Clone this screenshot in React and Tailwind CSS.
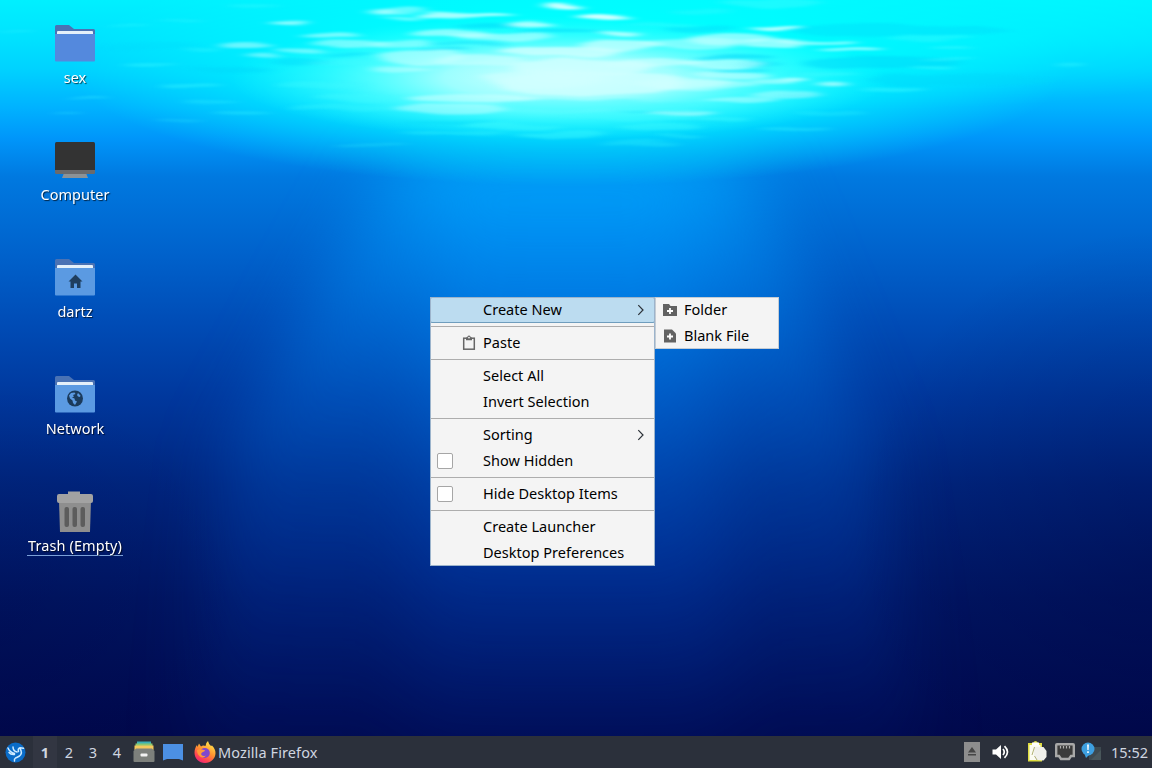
import { clsx } from 'clsx';

// bright streaks on the water surface: [cx, cy, rx, ry, opacity]
const STREAKS = [
  [13, 33, 20, 1.2, 0.25], [255, 4, 24, 2, 0.3], [180, 20, 22, 1.5, 0.3], [128, 24, 20, 1.5, 0.25],
  [288, 22, 16, 1.8, 0.7], [380, 10, 12, 3, 0.6], [245, 44, 26, 3, 0.5], [200, 49, 18, 2, 0.3],
  [262, 55, 16, 2.5, 0.45], [330, 34, 28, 3, 0.55], [350, 42, 36, 3, 0.5], [300, 49, 26, 2.5, 0.45],
  [150, 63, 26, 2, 0.35], [190, 84, 30, 2, 0.35], [86, 98, 18, 1.2, 0.35], [66, 112, 14, 1, 0.25],
  [210, 101, 26, 1.5, 0.25], [240, 112, 28, 1.5, 0.3], [180, 120, 24, 1.5, 0.2], [340, 62, 34, 4, 0.4],
  [320, 84, 44, 4, 0.35], [360, 97, 44, 4, 0.4], [370, 144, 36, 1.5, 0.2], [340, 108, 50, 3, 0.3],
  [400, 10, 24, 3, 0.45], [465, 14, 48, 2.5, 0.8], [400, 16, 22, 1.5, 0.5], [562, 5, 17, 2.4, 1],
  [602, 15.5, 26, 2.6, 1], [530, 24, 24, 2.4, 0.8], [617, 32, 20, 2, 0.8], [450, 33, 40, 5, 0.6],
  [500, 36, 50, 4, 0.55], [400, 42, 30, 3.5, 0.45], [560, 50, 60, 5, 0.8], [620, 44, 40, 6, 0.7],
  [420, 56, 44, 7, 0.55], [480, 60, 44, 6, 0.55], [400, 68, 30, 3, 0.45], [580, 66, 70, 9, 0.8],
  [650, 62, 50, 4, 0.6], [590, 82, 90, 12, 0.75], [540, 78, 60, 9, 0.6], [680, 82, 50, 5, 0.55],
  [470, 97, 64, 5, 0.55], [450, 108, 56, 4.5, 0.45], [600, 104, 100, 5, 0.42], [510, 125, 50, 3.5, 0.42],
  [560, 134, 44, 3.5, 0.42], [450, 132, 54, 2, 0.3], [620, 116, 64, 4, 0.4], [680, 112, 34, 2.4, 0.5],
  [660, 126, 40, 4, 0.4], [710, 118, 38, 2, 0.4], [640, 142, 38, 2, 0.25], [676, 136, 26, 1.8, 0.3],
  [690, 42, 50, 5, 0.45], [730, 38, 42, 5, 0.6], [775, 27, 26, 2.2, 0.85], [772, 43, 30, 4.5, 0.65],
  [815, 41, 40, 2, 0.6], [850, 48, 30, 1.8, 0.65], [720, 64, 44, 4, 0.55], [730, 74, 40, 3.5, 0.55],
  [792, 77, 14, 2.6, 0.75], [770, 80, 24, 3, 0.5], [820, 72, 36, 2, 0.42], [831, 84, 14, 2.4, 0.65],
  [700, 84, 56, 5, 0.45], [785, 94, 36, 3.5, 0.45], [740, 99, 36, 3, 0.45], [893, 89, 32, 3, 0.42],
  [830, 112, 34, 3, 0.2], [795, 128, 34, 2, 0.3], [930, 38, 42, 3, 0.35], [950, 48, 20, 2, 0.42],
  [946, 58, 28, 1.2, 0.4], [932, 66, 22, 2, 0.42], [1070, 65, 14, 1.5, 0.35], [770, 2, 50, 5, 0.42],
  [700, 11, 28, 2, 0.3], [660, 24, 34, 2, 0.35],
];

// darker troughs between the waves
const TROUGHS = [
  [490, 26, 34, 2, 0.5], [560, 32, 42, 2, 0.5], [700, 29, 34, 3, 0.4], [470, 44, 40, 2, 0.35],
  [440, 50, 30, 1.5, 0.45], [735, 58, 40, 3, 0.5], [760, 65, 20, 3, 0.4],
  [740, 70, 30, 1.5, 0.4], [900, 31, 110, 6, 0.35], [450, 123, 46, 2, 0.35], [880, 62, 80, 6, 0.5],
  [700, 121, 30, 1.2, 0.35], [650, 112, 34, 1, 0.3], [800, 96, 20, 1.5, 0.3], [350, 54, 24, 2, 0.4],
  [300, 62, 30, 4, 0.4], [230, 70, 40, 3, 0.4], [150, 47, 50, 4, 0.2], [960, 80, 90, 6, 0.4],
];

const ICONS = [
  { label: 'sex', kind: 'folder' },
  { label: 'Computer', kind: 'computer' },
  { label: 'dartz', kind: 'home' },
  { label: 'Network', kind: 'network' },
  { label: 'Trash (Empty)', kind: 'trash' },
];

const MENU = [
  { label: 'Create New', arrow: true, active: true },
  null,
  { label: 'Paste', paste: true },
  null,
  { label: 'Select All' },
  { label: 'Invert Selection' },
  null,
  { label: 'Sorting', arrow: true },
  { label: 'Show Hidden', check: true },
  null,
  { label: 'Hide Desktop Items', check: true },
  null,
  { label: 'Create Launcher' },
  { label: 'Desktop Preferences' },
];

const Wallpaper = () => (
  <svg className="absolute inset-0" width="1152" height="768" viewBox="0 0 1152 768">
    <defs>
      <linearGradient id="sea" x1="0" y1="0" x2="0" y2="768" gradientUnits="userSpaceOnUse">
        <stop offset="0" stopColor="#00f0ff" />
        <stop offset="0.05" stopColor="#00e2ff" />
        <stop offset="0.09" stopColor="#00d2ff" />
        <stop offset="0.14" stopColor="#00b2ff" />
        <stop offset="0.18" stopColor="#0096fa" />
        <stop offset="0.23" stopColor="#0079e0" />
        <stop offset="0.33" stopColor="#0062cc" />
        <stop offset="0.42" stopColor="#004cb6" />
        <stop offset="0.52" stopColor="#00379c" />
        <stop offset="0.63" stopColor="#00257e" />
        <stop offset="0.78" stopColor="#001562" />
        <stop offset="0.96" stopColor="#00084c" />
      </linearGradient>
      <radialGradient id="shade" cx="0.5" cy="0.5" r="0.5">
        <stop offset="0" stopColor="#000038" stopOpacity="0.4" />
        <stop offset="1" stopColor="#000038" stopOpacity="0" />
      </radialGradient>
      <linearGradient id="ray" x1="0" y1="130" x2="0" y2="760" gradientUnits="userSpaceOnUse">
        <stop offset="0" stopColor="#00b4ff" stopOpacity="0.8" />
        <stop offset="0.15" stopColor="#00a0ff" stopOpacity="0.62" />
        <stop offset="0.4" stopColor="#0082f0" stopOpacity="0.42" />
        <stop offset="0.7" stopColor="#0050d0" stopOpacity="0.3" />
        <stop offset="1" stopColor="#0030a0" stopOpacity="0.08" />
      </linearGradient>
      <radialGradient id="glow" cx="0.5" cy="0.5" r="0.5">
        <stop offset="0" stopColor="#00ffff" />
        <stop offset="0.4" stopColor="#00ffff" stopOpacity="0.9" />
        <stop offset="0.7" stopColor="#00ffff" stopOpacity="0.42" />
        <stop offset="1" stopColor="#00ffff" stopOpacity="0" />
      </radialGradient>
      <radialGradient id="sun" cx="0.5" cy="0.5" r="0.5">
        <stop offset="0" stopColor="#d6ffff" />
        <stop offset="0.35" stopColor="#b8ffff" stopOpacity="0.85" />
        <stop offset="0.7" stopColor="#70ffff" stopOpacity="0.4" />
        <stop offset="1" stopColor="#40ffff" stopOpacity="0" />
      </radialGradient>
      <filter id="soft" x="-40%" y="-40%" width="180%" height="180%" colorInterpolationFilters="sRGB">
        <feGaussianBlur stdDeviation="34 26" />
      </filter>
      <filter id="wave" x="0" y="-20" width="1152" height="220" filterUnits="userSpaceOnUse" colorInterpolationFilters="sRGB">
        <feTurbulence type="fractalNoise" baseFrequency="0.014 0.07" numOctaves="2" seed="4" />
        <feDisplacementMap in="SourceGraphic" scale="9" xChannelSelector="R" yChannelSelector="G" />
        <feGaussianBlur stdDeviation="7 1.1" />
      </filter>
    </defs>
    <rect width="1152" height="768" fill="url(#sea)" />
    <g filter="url(#soft)">
      <polygon points="400,150 740,150 870,440 930,800 180,800 230,440" fill="url(#ray)" opacity="0.8" />
      <polygon points="440,150 690,150 740,800 400,800" fill="url(#ray)" opacity="0.7" />
    </g>
    <ellipse cx="1152" cy="560" rx="300" ry="330" fill="url(#shade)" opacity="0.7" />
    <ellipse cx="0" cy="640" rx="260" ry="260" fill="url(#shade)" opacity="0.4" />
    <ellipse cx="570" cy="66" rx="500" ry="120" fill="url(#glow)" />
    <ellipse cx="850" cy="20" rx="500" ry="90" fill="url(#glow)" opacity="0.5" />
    <ellipse cx="560" cy="78" rx="330" ry="62" fill="url(#sun)" />
    <g filter="url(#wave)">
      {TROUGHS.map(([cx, cy, rx, ry, o], i) => (
        <ellipse key={i} cx={cx} cy={cy} rx={rx} ry={ry} fill="#00d8fa" opacity={o} />
      ))}
      {STREAKS.map(([cx, cy, rx, ry, o], i) => (
        <ellipse key={i} cx={cx + 1} cy={cy + 1} rx={rx} ry={ry} fill={o > 0.42 ? '#d0ffff' : '#40faff'} opacity={o} />
      ))}
    </g>
  </svg>
);

const Folder = ({ color, children }) => (
  <svg width="40" height="38" viewBox="0 0 40 38">
    <path d="M0 1.5Q0 0 1.5 0H14L19 4H38.5Q40 4 40 5.5V30H0Z" fill="#4a72b4" />
    <rect x="2" y="6" width="36" height="6" rx="1" fill="#e4f0fa" />
    <path d="M0 9H40V35.5Q40 36.5 39 36.5H1Q0 36.5 0 35.5Z" fill={color} />
    {children}
  </svg>
);

const DesktopIcon = ({ kind }) => {
  if (kind === 'computer') {
    return (
      <svg width="40" height="38" viewBox="0 0 40 38">
        <path d="M9 31H31L33 36H7Z" fill="#8c9296" />
        <path d="M0 27H40V30.5Q40 32 38.5 32H1.5Q0 32 0 30.5Z" fill="#6a6a6c" />
        <path d="M0 1.5Q0 0 1.5 0H38.5Q40 0 40 1.5V28H0Z" fill="#333333" />
      </svg>
    );
  }
  if (kind === 'trash') {
    return (
      <svg width="40" height="42" viewBox="0 0 40 42" className="-mt-0.5">
        <path d="M4 10H36L35 41H5Z" fill="#8e8e8e" />
        <path d="M13 0.5H25V3H36Q38 3 38 5V10Q38 12 36 12H4Q2 12 2 10V5Q2 3 4 3H13Z" fill="#a2a2a2" />
        <g fill="#5c5c5c">
          <rect x="9.5" y="16" width="4.5" height="20" rx="2" />
          <rect x="17.5" y="16" width="4.5" height="20" rx="2" />
          <rect x="25.5" y="16" width="4.5" height="20" rx="2" />
        </g>
      </svg>
    );
  }
  return (
    <Folder color={kind === 'folder' ? '#5489dd' : '#5b9ae2'}>
      {kind === 'home' && (
        <path d="M20.5 15.5L27.5 22.5H25.5V29H22V24.5H19V29H15.5V22.5H13.5Z" fill="#1f3e5e" />
      )}
      {kind === 'network' && (
        <>
          <circle cx="20" cy="22.5" r="8" fill="#1b3b5c" />
          <path d="M14 19.5L16 17L19.5 16.5L20.5 18L18 19L19 20.5L17 21.5L19.5 22.5L20 24.5L22 25.5L20 29L18 27L17.5 24.5L15 22.5ZM23 17L25.5 19.5L25 21L23 20.5L22 19Z" fill="#5b9ae2" />
        </>
      )}
    </Folder>
  );
};

const Arrow = () => (
  <svg width="8" height="12" viewBox="0 0 8 12" className="mr-2.5 ml-auto">
    <path d="M1.3 1.2L6 6L1.3 10.8" fill="none" stroke="#2c3238" strokeWidth="1.2" />
  </svg>
);

const MenuItem = ({ item }) => (
  <div className={clsx('flex h-[26px] items-center', item.active && 'rounded-[2px] bg-[#bcdcf0] ring-1 ring-[#6f9dbd] ring-inset')}>
    <div className="flex w-[53px] shrink-0 items-center">
      {item.check && <span className="ml-[7px] size-4 rounded-[2px] border border-[#a6a6a6] bg-white" />}
      {item.paste && (
        <svg width="14" height="16" viewBox="0 0 14 16" className="ml-8">
          <rect x="1.7" y="3.2" width="10.6" height="11" fill="none" stroke="#666" strokeWidth="1.5" />
          <path d="M4 2.5H5.2Q5.4 0.5 7 0.5T8.8 2.5H10V5.2H4Z" fill="#666" />
          <circle cx="7" cy="2.6" r="0.9" fill="#f4f4f4" />
        </svg>
      )}
    </div>
    <span className="pb-[2px] whitespace-nowrap">{item.label}</span>
    {item.arrow && <Arrow />}
  </div>
);

const ContextMenu = () => (
  <div className="absolute top-[297px] left-[430px] flex items-start text-[14.5px] leading-none tracking-[0.02px] text-black">
    <div className="relative w-[225px] bg-[#f4f4f4]">
      {MENU.map((item, i) =>
        item ? (
          <MenuItem key={i} item={item} />
        ) : (
          <div key={i} className="flex h-[7px] items-center">
            <div className="h-px w-full bg-[#adadad]" />
          </div>
        )
      )}
      <div className="pointer-events-none absolute inset-0 border border-[#9cb4cc]" />
    </div>
    <div className="h-[52px] w-[124px] bg-[#f4f4f4] ring-1 ring-[#c4ccd4] ring-inset">
      <div className="flex h-[26px] items-center gap-[7px] pl-2">
        <svg width="14" height="14" viewBox="0 0 14 14">
          <path d="M0 1H6L7.5 3H14V13H0Z" fill="#626262" />
          <path d="M7 5V11M4 8H10" stroke="#fff" strokeWidth="1.8" />
        </svg>
        <span className="pb-[2px]">Folder</span>
      </div>
      <div className="flex h-[26px] items-center gap-[7px] pl-2">
        <svg width="14" height="14" viewBox="0 0 14 14">
          <path d="M1 0.5H9L13 4.5V13.5H1Z" fill="#626262" />
          <path d="M7 4.5V10.5M4 7.5H10" stroke="#fff" strokeWidth="1.8" />
        </svg>
        <span className="pb-[2px]">Blank File</span>
      </div>
    </div>
  </div>
);

const StartIcon = () => (
  <svg width="21" height="21" viewBox="0 0 21 21">
    <circle cx="10.5" cy="10.5" r="10" fill="#0a6cc8" />
    <path
      d="M3 6Q4.5 10 9.5 11.5M4 10.5Q6 13 9.5 12.5M8 5Q8 9 12 10M13.5 9.5Q12.5 6.5 15 5.8L18.5 6.3M15 6.5Q18 11 14.5 14Q12 15.5 10.5 16Q9 17 9.5 19"
      fill="none"
      stroke="#cdeaff"
      strokeWidth="1.5"
      strokeLinecap="round"
    />
  </svg>
);

const Firefox = () => (
  <svg width="22" height="22" viewBox="0 0 22 22">
    <defs>
      <linearGradient id="fox" x1="0.8" y1="0.1" x2="0.3" y2="1">
        <stop offset="0" stopColor="#ffe14a" />
        <stop offset="0.45" stopColor="#ff9030" />
        <stop offset="0.8" stopColor="#ff4055" />
        <stop offset="1" stopColor="#e82678" />
      </linearGradient>
    </defs>
    <path d="M11 22C5 22 0.5 17.5 0.5 11.8C0.5 8.5 1.5 6 3 4L3.5 6L5 2.5L7 5.5Q9 4 11.5 5Q11.5 2 14 0Q14.5 3 17 5L18 4.5Q21.5 8 21.5 12C21.5 17.5 17 22 11 22Z" fill="url(#fox)" />
    <circle cx="10.8" cy="12" r="5" fill="#8048cc" />
    <path d="M3 9Q6 7.5 10 9Q12 9.5 10 10.5Q7.5 11 7 13Q8 16 12 14.5Q9.5 18 6 15.5Q3 13 3 9Z" fill="#ff9838" />
  </svg>
);

const Taskbar = () => (
  <div className="absolute inset-x-0 bottom-0 flex h-8 items-center bg-[#2b303b] text-[14.5px] leading-none text-[#d0d6e0]">
    <div className="flex w-[33px] items-center pl-[5px]">
      <StartIcon />
    </div>
    <div className="flex">
      {['1', '2', '3', '4'].map((n) => (
        <span key={n} className={clsx('flex h-8 w-6 items-center justify-center', n === '1' && 'bg-[#323642] font-bold')}>
          {n}
        </span>
      ))}
    </div>
    <svg width="22" height="22" viewBox="0 0 22 22" className="ml-[4px]">
      <path d="M4 0.5H18V4H4Z" fill="#3bb0b4" />
      <path d="M2.5 2.5H19.5V6H2.5Z" fill="#8cc870" />
      <path d="M1.5 4.5H20.5V9H1.5Z" fill="#f4c95c" />
      <path d="M3 7.5H19L21.5 10V20Q21.5 21 20.5 21H1.5Q0.5 21 0.5 20V10Z" fill="#7d807c" />
      <rect x="7.5" y="12.5" width="7" height="3" rx="1" fill="#f2f2f2" />
    </svg>
    <svg width="20" height="17" viewBox="0 0 20 17" className="mt-px ml-2">
      <path d="M0 0H20V16.5L16 15H4L0 16.5Z" fill="#4c90e4" />
    </svg>
    <div className="ml-[11px] flex items-center gap-[2px]">
      <Firefox />
      <span className="tracking-[0.1px]">Mozilla Firefox</span>
    </div>

    <div className="ml-auto flex items-center">
      <svg width="16" height="20" viewBox="0 0 16 20">
        <rect width="16" height="20" fill="#8d8d8d" />
        <path d="M8 5L12 10.5H4ZM4 12H12V13.5H4Z" fill="#454545" />
      </svg>
      <svg width="18" height="16" viewBox="0 0 18 16" className="ml-3">
        <path d="M0.5 5.5H4L9 1V15L4 10.5H0.5Z" fill="#fff" />
        <path d="M11 5Q13.5 8 11 11M12.5 2.2Q18.5 8 12.5 13.8" fill="none" stroke="#fff" strokeWidth="1.7" />
      </svg>
      <svg width="20" height="22" viewBox="0 0 20 22" className="ml-[17px]">
        <path d="M1 2H6Q7 0 8.5 0T11 2H15V20.5H1Z" fill="#dedc40" />
        <path d="M2.5 4H13.5V19H2.5Z" fill="#fbfbf2" />
        <path d="M5 1.5H12V4.5H5Z" fill="#fff" />
        <path d="M7 6L16.5 6L19.5 10V16L16.5 19.5L10 19L7 15Z" fill="#f0f0ec" />
        <path d="M5 14L7.5 6M7.5 15L10 19" fill="none" stroke="#a8a868" strokeWidth="0.9" />
      </svg>
      <svg width="20" height="18" viewBox="0 0 20 18" className="ml-2">
        <path d="M1.2 2Q1.2 1.2 2 1.2H18Q18.8 1.2 18.8 2V13H16L14 16H6L4 13H1.2Z" fill="#3a3a3a" stroke="#a8a8a8" strokeWidth="2.4" />
        <path d="M5.5 3V5.5M8.5 3V5.5M11.5 3V5.5M14.5 3V5.5" stroke="#b0b0b0" strokeWidth="1.2" />
      </svg>
      <svg width="20" height="20" viewBox="0 0 20 20" className="ml-[6px]">
        <rect x="8" y="5" width="12" height="13" fill="#3d4a50" />
        <path d="M10 18L20 8V18Z" fill="#49565a" />
        <circle cx="7" cy="7" r="6.5" fill="#3d9fe0" />
        <path d="M3.5 12L5 16L8 13Z" fill="#3d9fe0" />
        <path d="M6.1 2.5H7.9L7.6 8H6.4ZM6.2 9.3H7.8V11H6.2Z" fill="#fff" />
      </svg>
      <span className="mr-1 ml-2.5">15:52</span>
    </div>
  </div>
);

export default function App() {
  return (
    <div className="relative h-[768px] w-[1152px] overflow-hidden bg-[#00135c] font-['Noto_Sans','Open_Sans',sans-serif]">
      <Wallpaper />
      <div className="relative flex w-[150px] flex-col pt-[25px]">
        {ICONS.map(({ label, kind }) => (
          <div key={label} className="flex h-[117px] flex-col items-center">
            <div className="flex h-[42px] items-start">
              <DesktopIcon kind={kind} />
            </div>
            <span
              className={clsx(
                'flex h-[21px] items-center px-px text-[14.5px] leading-none whitespace-nowrap text-white [text-shadow:1px_1px_1px_#000000b0]',
                kind === 'trash' ? 'border-b border-[#7ba0d8] pt-px tracking-[0.1px]' : 'pb-px'
              )}
            >
              {label}
            </span>
          </div>
        ))}
      </div>
      <ContextMenu />
      <Taskbar />
    </div>
  );
}
